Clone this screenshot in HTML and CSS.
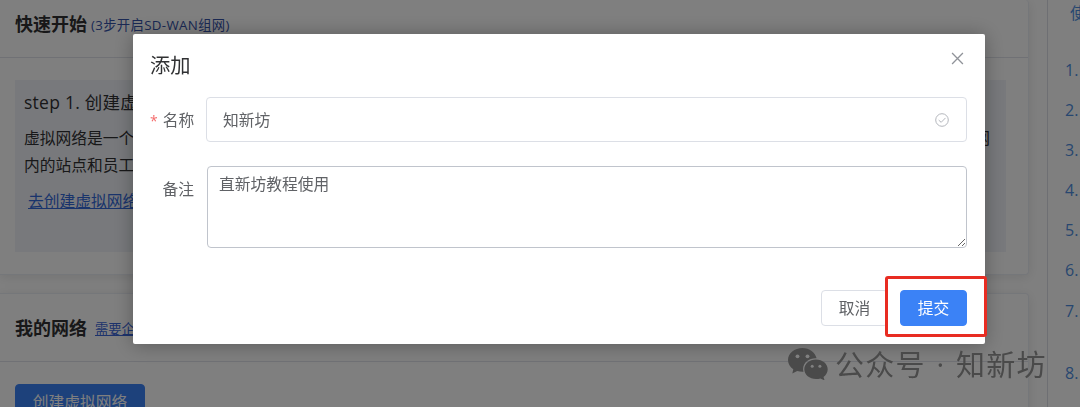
FILE: index.html
```
<!DOCTYPE html>
<html lang="zh-CN">
<head>
    <meta charset="UTF-8">
    <meta name="viewport" content="width=device-width, initial-scale=1.0">
    <title>SD-WAN组网</title>
    <link rel="stylesheet" href="styles.css">
</head>
<body>

<div class="page">
    <div class="main">
        <div class="card start-card">
            <div class="card-header">
                <h2>快速开始</h2>
                <span class="sub">(3步开启SD-WAN组网)</span>
            </div>
            <div class="step">
                <h3>step 1. 创建虚</h3>
                <p class="full-line"><span>虚拟网络是一个</span><span>网</span></p>
                <p>内的站点和员工</p>
                <a href="#">去创建虚拟网络</a>
            </div>
        </div>
        <div class="card network-card">
            <div class="card-header">
                <h2>我的网络</h2>
                <a class="sub" href="#">需要企</a>
            </div>
            <button class="btn btn-primary create">创建虚拟网络</button>
        </div>
    </div>
    <div class="guide">
        <h4>使</h4>
        <ul>
            <li>1.</li>
            <li>2.</li>
            <li>3.</li>
            <li>4.</li>
            <li>5.</li>
            <li>6.</li>
            <li class="tall">7.</li>
            <li>8.</li>
        </ul>
    </div>
</div>

<div class="overlay">
    <form class="dialog">
        <div class="dialog-header">
            <span>添加</span>
            <svg class="close" viewBox="0 0 12 12"><path d="M1 1L11 11M11 1L1 11"/></svg>
        </div>
        <div class="form-item">
            <label class="required" for="name">名称</label>
            <div class="input-box">
                <input type="text" id="name" value="知新坊">
                <svg class="check" viewBox="0 0 14 14"><circle cx="7" cy="7" r="6.3"/><path d="M3.700 7.100L6.200 9.300L10.500 4.900"/></svg>
            </div>
        </div>
        <div class="form-item remark">
            <label for="remark">备注</label>
            <textarea id="remark">直新坊教程使用</textarea>
        </div>
        <div class="dialog-footer">
            <button type="button" class="btn">取消</button>
            <button type="button" class="btn btn-primary">提交</button>
        </div>
    </form>
</div>

<div class="highlight"></div>

<div class="watermark">
    <svg viewBox="0 0 40 32">
        <path d="M14.500 0C6.500 0 0 5.300 0 12c0 3.800 2.100 7.100 5.300 9.300L4.300 25.500l4.900-2.500c1.700.5 3.400.8 5.300.8l1-.1c-.3-.9-.4-1.800-.4-2.700 0-6.200 5.700-10.700 12.500-10.700h1C27.300 4.300 21.500 0 14.500 0z"/>
        <path d="M28 11.500c-6.500 0-11.700 4.300-11.700 9.700S21.500 31 28 31c1.600 0 3.100-.2 4.400-.6l4.200 2-1.100-3.500c2.600-1.800 4.200-4.600 4.200-7.700 0-5.400-5.200-9.700-11.700-9.700z"/>
        <g class="eyes">
            <circle cx="9.500" cy="8.300" r="1.900"/>
            <circle cx="19.500" cy="8.300" r="1.900"/>
            <circle cx="24.200" cy="18.300" r="1.500"/>
            <circle cx="31.900" cy="18.300" r="1.500"/>
        </g>
    </svg>
    <span>公众号</span>
    <span class="dot">·</span>
    <span>知新坊</span>
</div>

</body>
</html>
```
FILE: styles.css
```
* {
    box-sizing: border-box;
    font-family: "Open Sans", "Noto Sans CJK SC", sans-serif;
}

body {
    margin: 0;
    height: 407px;
    overflow: hidden;
    background-color: #fff;
    color: #303133;
    font-size: 15.75px;
}

h2, h3, h4, p, ul {
    margin: 0;
    padding: 0;
}

a {
    color: #3268d8;
}

.page {
    display: flex;
    height: 407px;
    overflow: hidden;
}

.main {
    width: 1029px;
    flex: none;
}

.card {
    border: solid #ebeef5 1px;
    border-left: none;
    border-radius: 0 4px 4px 0;
    box-shadow: 0 2px 12px rgba(0, 0, 0, 0.1);
    background-color: #fff;
}

.start-card {
    height: 275px;
    border-top: none;
    margin-bottom: 18px;
}

.network-card {
    height: 160px;
}

.card-header {
    display: flex;
    align-items: center;
    height: 58px;
    padding: 0 15px 9px;
    border-bottom: solid #e0e3ea 1px;
}

.network-card .card-header {
    height: 68px;
    padding-bottom: 0;
}

.card-header h2 {
    font-size: 18px;
    line-height: 26px;
}

.sub {
    font-size: 13.3px;
    letter-spacing: 0.35px;
    margin: 1px 0 0 4px;
    color: #3552a8;
}

a.sub {
    margin-left: 8px;
    color: #3a66d8;
    letter-spacing: 0;
}

.step {
    margin: 22px 22px 0 15px;
    height: 172px;
    padding: 9px 16px 0 9px;
    background-color: #f0f3f9;
}

.step h3 {
    font-size: 17.5px;
    letter-spacing: 0.25px;
    font-weight: normal;
    line-height: 27px;
    margin-bottom: 9px;
}

.step p {
    line-height: 27px;
    white-space: nowrap;
}

.step .full-line {
    display: flex;
    justify-content: space-between;
}

.step a {
    display: inline-block;
    margin: 9px 4px;
    line-height: 26px;
}

.guide {
    flex: 1;
    margin-left: 18px;
    padding-left: 17px;
    border-left: solid #dcdfe6 1px;
    color: #4f8ee0;
    white-space: nowrap;
}

.guide h4 {
    font-weight: normal;
    font-size: 15.75px;
    line-height: 26px;
    padding-left: 5px;
    margin-bottom: 24px;
}

.guide li {
    list-style: none;
    height: 40.1px;
    line-height: 40px;
    font-size: 16px;
}

.guide .tall {
    height: 62px;
}

.btn {
    height: 36px;
    width: 67px;
    padding: 0 0 2px;
    border: solid #dcdfe6 1px;
    border-radius: 4px;
    background-color: #fff;
    color: #606266;
    font-size: 15.75px;
}

.btn-primary {
    background-color: #3b82f6;
    border-color: #3b82f6;
    color: #fff;
}

.create {
    width: 130px;
    margin: 22px 15px;
}

.overlay {
    position: fixed;
    inset: 0;
    background-color: rgba(0, 0, 0, 0.5);
    padding: 34px 0 0 133px;
}

.dialog {
    width: 852px;
    height: 310px;
    padding: 18px 18px 0 17px;
    border-radius: 2px;
    background-color: #fff;
    box-shadow: 0 1px 20px rgba(0, 0, 0, 0.3);
}

.dialog-header {
    display: flex;
    justify-content: space-between;
    font-size: 20.3px;
    line-height: 27px;
    height: 45px;
}

svg {
    fill: none;
}

.close {
    width: 13px;
    height: 13px;
    margin-right: 3px;
    stroke: #909399;
    stroke-width: 1.2;
}

.form-item {
    display: flex;
    margin-bottom: 24px;
}

.form-item label {
    width: 44px;
    margin-right: 12px;
    line-height: 46px;
    text-align: right;
    color: #606266;
    white-space: nowrap;
}

.form-item .required {
    height: 45px;
}

.required::before {
    content: "*";
    color: #f56c6c;
    font-size: 14px;
    margin-right: 5px;
}

.input-box {
    flex: 1;
    display: flex;
    align-items: center;
    height: 45px;
    padding: 0 17px 0 16px;
    border: solid #dcdfe6 1px;
    border-radius: 4px;
}

.input-box input {
    flex: 1;
    padding: 0;
    border: none;
    outline: none;
    font-size: 15.75px;
    color: #606266;
}

.check {
    width: 14px;
    height: 14px;
    stroke: #b4b7bd;
}

textarea {
    flex: 1;
    height: 82px;
    margin-left: 1px;
    padding: 4px 11px;
    border: solid #c0c4cc 1px;
    border-radius: 4px;
    outline: none;
    resize: vertical;
    font-size: 15.75px;
    line-height: 26px;
    color: #606266;
}

.remark {
    margin-bottom: 42px;
}

.dialog-footer {
    display: flex;
    justify-content: flex-end;
    gap: 12px;
}

/* red frame around the submit button */
.highlight {
    position: fixed;
    left: 885px;
    top: 276px;
    width: 102px;
    height: 61px;
    border: solid #e82c22 3px;
    border-radius: 3px;
}

.watermark {
    position: fixed;
    left: 788px;
    top: 342px;
    display: flex;
    align-items: center;
    height: 42px;
    font-size: 29px;
    letter-spacing: 1.3px;
    color: #4a4a4a;
    white-space: nowrap;
}

.watermark svg {
    width: 40px;
    height: 32px;
    margin: 2px 7px 0 0;
    fill: #4a4a4a;
}

.eyes {
    fill: #808080;
}

.watermark .dot {
    width: 30px;
    text-align: center;
}
```
